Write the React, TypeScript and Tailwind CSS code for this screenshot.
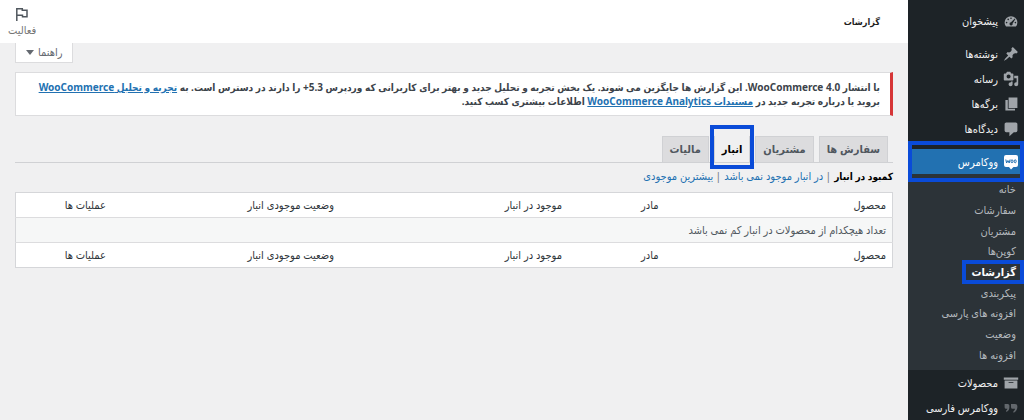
import React from "react";

const menuIcons = {
  dashboard:
    "M3.8 17h12.4A8 8 0 0 0 18 12a8 8 0 0 0-16 0c0 1.900.7 3.600 1.800 5zM10 5.500a1 1 0 1 1 0 2 1 1 0 0 1 0-2zM6.500 7a1 1 0 1 1 0 2 1 1 0 0 1 0-2zM14.800 6.800l.7.700-3.500 5.500a2 2 0 1 1-2-1.400zM4.500 11a1 1 0 1 1 0 2 1 1 0 0 1 0-2zM15.500 11a1 1 0 1 1 0 2 1 1 0 0 1 0-2z",
  posts:
    "M10.44 3.02l1.82-1.82 6.36 6.35-1.83 1.82c-1.05-.68-2.48-.57-3.41.36l-.75.75c-.92.93-1.04 2.35-.35 3.41l-1.83 1.82-2.41-2.41-2.8 2.79c-.42.42-3.38 2.71-3.8 2.29s1.86-3.39 2.28-3.81l2.79-2.79L4.1 9.36l1.83-1.82c1.05.69 2.48.57 3.4-.36l.75-.75c.93-.92 1.05-2.35.36-3.41z",
  media:
    "M13 11V4c0-.55-.45-1-1-1h-1.67L9 1H5L3.67 3H2c-.55 0-1 .45-1 1v7c0 .55.45 1 1 1h10c.55 0 1-.45 1-1zM7 4.5c1.38 0 2.5 1.12 2.5 2.5S8.38 9.5 7 9.5 4.5 8.38 4.5 7 5.62 4.5 7 4.5zM14 6h5v10.5c0 1.38-1.12 2.5-2.5 2.5S14 17.88 14 16.5s1.12-2.5 2.5-2.5c.17 0 .34.02.5.05V9h-3V6zm-4 8.05V13h2v3.5c0 1.38-1.12 2.5-2.5 2.5S7 17.88 7 16.5 8.12 14 9.5 14c.17 0 .34.02.5.05z",
  pages: "M7 15V2h11v13H7zm-1 1h9v2H3V5h3v11z",
  comments:
    "M4 2h12c1.100 0 2 .9 2 2v8c0 1.100-.9 2-2 2h-2.500l-5.500 5v-5H4c-1.100 0-2-.9-2-2V4c0-1.100.9-2 2-2z",
  products: "M19 3v3H1V3h18zM2 7h16v10H2V7zm11 3V9H7v1h6z",
  persian:
    "M2 5h4a2 2 0 0 1 2 2v2c0 3-1.500 5-4 6v-2c1-.6 1.500-1.300 1.500-2H4a2 2 0 0 1-2-2zM10 5h5a3 3 0 0 1 3 3c0 4-2 7-5 8v-2c1.200-.8 2-1.800 2-3h-3a2 2 0 0 1-2-2z",
};

type IconName = keyof typeof menuIcons;

const MenuIcon = ({ name }: { name: IconName }) => (
  <svg
    viewBox="0 0 20 20"
    className={
      name === "persian"
        ? "size-4 shrink-0 fill-[#62676c]"
        : "size-4 shrink-0 fill-[#a0a5aa]"
    }
    fillRule="evenodd"
    aria-hidden="true"
  >
    <path d={menuIcons[name]} />
  </svg>
);

const WooIcon = () => (
  <svg viewBox="0 0 16 16" className="size-4 shrink-0" aria-hidden="true">
    <path
      fill="#fff"
      d="M3 1h10a2 2 0 0 1 2 2v8a2 2 0 0 1-2 2h-2.500L8 15.500 6 13H3a2 2 0 0 1-2-2V3a2 2 0 0 1 2-2z"
    />
    <path
      fill="none"
      stroke="#2271b1"
      strokeWidth="1"
      d="M2.800 5.500l.8 3.500 1.300-2.500L6.200 9l.9-3.500"
    />
    <ellipse cx="9" cy="7.300" rx="1" ry="1.500" fill="none" stroke="#2271b1" />
    <ellipse cx="12.200" cy="7.300" rx="1" ry="1.500" fill="none" stroke="#2271b1" />
  </svg>
);

const MenuItem = ({ icon, label }: { icon: IconName; label: string }) => (
  <li>
    <a
      href="#"
      className="flex h-[25px] items-center gap-[5px] pr-[5px] whitespace-nowrap text-[#f0f0f1]"
    >
      <MenuIcon name={icon} />
      {label}
    </a>
  </li>
);

const submenu = [
  "خانه",
  "سفارشات",
  "مشتریان",
  "کوپن‌ها",
  "گزارشات",
  "پیکربندی",
  "افزونه های پارسی",
  "وضعیت",
  "افزونه ها",
];

const Sidebar = () => (
  <nav className="w-[116px] shrink-0 bg-[#1d2327] text-[11px] leading-4">
    <ul className="pt-2">
      <MenuItem icon="dashboard" label="پیشخوان" />
    </ul>
    <ul className="pt-2">
      <MenuItem icon="posts" label="نوشته‌ها" />
      <MenuItem icon="media" label="رسانه" />
      <MenuItem icon="pages" label="برگه‌ها" />
      <MenuItem icon="comments" label="دیدگاه‌ها" />
    </ul>
    <ul className="pt-2">
      <li>
        <a
          href="#"
          className="relative flex h-[25px] items-center gap-[5px] bg-[#2271b1] pr-[5px] text-white"
        >
          <WooIcon />
          ووکامرس
          <span className="absolute top-2 left-0 border-y-4 border-l-4 border-y-transparent border-l-[#f0f0f1]" />
          <span className="absolute -inset-y-2 inset-x-0 border-4 border-[#0a4bd8]" />
        </a>
        <ul className="flex h-[196px] flex-col bg-[#2c3338] py-[5px]">
          {submenu.map((label) => (
            <li key={label} className="flex flex-1 items-center pr-2">
              {label === "گزارشات" ? (
                <a href="#" className="relative font-bold text-white">
                  {label}
                  <span className="absolute -inset-y-1 -right-2 -left-2.5 border-4 border-[#0a4bd8]" />
                </a>
              ) : (
                <a href="#" className="whitespace-nowrap text-[#b4b9be]">
                  {label}
                </a>
              )}
            </li>
          ))}
        </ul>
      </li>
      <MenuItem icon="products" label="محصولات" />
      <MenuItem icon="persian" label="ووکامرس فارسی" />
    </ul>
  </nav>
);

const Header = () => (
  <header className="flex h-[43px] items-center justify-between bg-white pr-7 pl-2">
    <h1 className="text-[9px] font-bold text-[#1e1e1e]">گزارشات</h1>
    <button className="flex flex-col items-center text-[11px] leading-4 text-[#757575]">
      <svg
        viewBox="0 0 16 16"
        className="size-4 fill-none stroke-[#50575e]"
        strokeWidth="1.5"
        aria-hidden="true"
      >
        <path d="M2.800 15V2.700h5.500v1.600H13v6.500H8.500V9.200H3" />
      </svg>
      فعالیت
    </button>
  </header>
);

const Notice = () => (
  <div className="mt-[9px] border border-r-[3px] border-[#dcdcde] border-r-[#d63638] bg-white py-[7px] pr-2.5 pl-3 text-[10px] leading-[14px] font-bold text-[#3c434a]">
    <p>
      با انتشار WooCommerce 4.0. این گزارش ها جایگزین می شوند. یک بخش تجربه و
      تحلیل جدید و بهتر برای کاربرانی که وردپرس 5.3+ را دارند در دسترس است. به{" "}
      <a href="#" className="text-[#2271b1] underline">
        تجربه و تحلیل WooCommerce
      </a>{" "}
      بروید یا درباره تجربه جدید در{" "}
      <a href="#" className="text-[#2271b1] underline">
        مستندات WooCommerce Analytics
      </a>{" "}
      اطلاعات بیشتری کسب کنید.
    </p>
  </div>
);

const tabClass =
  "flex h-[26px] items-center border border-b-0 border-[#d0d1d4] bg-[#dcdcde] px-[7px] text-[#50575e]";

const Tabs = () => (
  <nav className="mt-5 flex gap-[5px] border-b border-[#d0d1d4] pr-[5px] text-[11px] font-bold">
    <a href="#" className={tabClass}>
      سفارش ها
    </a>
    <a href="#" className={tabClass}>
      مشتریان
    </a>
    <a
      href="#"
      className="relative flex h-[26px] items-center border-x border-[#d0d1d4] px-[7px] text-black"
    >
      انبار
      <span className="absolute -inset-x-[5px] -top-[11px] -bottom-[7px] border-4 border-[#0a4bd8]" />
    </a>
    <a href="#" className={tabClass}>
      مالیات
    </a>
  </nav>
);

const columns = [
  { label: "محصول", width: "w-[26%]" },
  { label: "مادر", width: "w-[11%]" },
  { label: "موجود در انبار", width: "w-[26%]" },
  { label: "وضعیت موجودی انبار", width: "w-[26%]" },
  { label: "عملیات ها", width: "w-[11%]" },
];

const HeadingRow = () => (
  <tr className="h-[25px]">
    {columns.map((column) => (
      <th
        key={column.label}
        scope="col"
        className={`${column.width} px-[6px] text-right font-normal whitespace-nowrap text-[#2c3338]`}
      >
        {column.label}
      </th>
    ))}
  </tr>
);

const StockTable = () => (
  <table className="mt-2 w-full table-fixed border border-[#d5d6d9] bg-white text-[11px] leading-4">
    <thead className="border-b border-[#dcdcde]">
      <HeadingRow />
    </thead>
    <tbody>
      <tr className="h-[25px] bg-[#f6f7f7]">
        <td colSpan={5} className="px-[6px] text-[#50575e]">
          تعداد هیچکدام از محصولات در انبار کم نمی باشد
        </td>
      </tr>
    </tbody>
    <tfoot className="border-t border-[#dcdcde]">
      <HeadingRow />
    </tfoot>
  </table>
);

const App = () => {
  return (
    <div
      dir="rtl"
      className="flex min-h-screen bg-[#f0f0f1] font-['Noto_Sans','DejaVu_Sans_Condensed','DejaVu_Sans',sans-serif]"
    >
      <Sidebar />
      <div className="min-w-0 flex-1">
        <Header />
        <main className="px-[15px]">
          <div className="flex justify-end">
            <button className="flex h-5 items-center gap-1 border border-t-0 border-[#dcdcde] bg-white px-2.5 text-[11px] text-[#646970]">
              راهنما
              <span className="border-x-4 border-t-[5px] border-x-transparent border-t-[#646970]" />
            </button>
          </div>
          <Notice />
          <Tabs />
          <ul className="mt-[5px] flex gap-0.5 text-[11px] leading-4 text-[#787c82]">
            <li>
              <a href="#" className="text-[10px] font-bold text-black">
                کمبود در انبار
              </a>{" "}
              |
            </li>
            <li>
              <a href="#" className="text-[#2271b1]">
                در انبار موجود نمی باشد
              </a>{" "}
              |
            </li>
            <li>
              <a href="#" className="text-[#2271b1]">
                بیشترین موجودی
              </a>
            </li>
          </ul>
          <StockTable />
        </main>
      </div>
    </div>
  );
};

export default App;
